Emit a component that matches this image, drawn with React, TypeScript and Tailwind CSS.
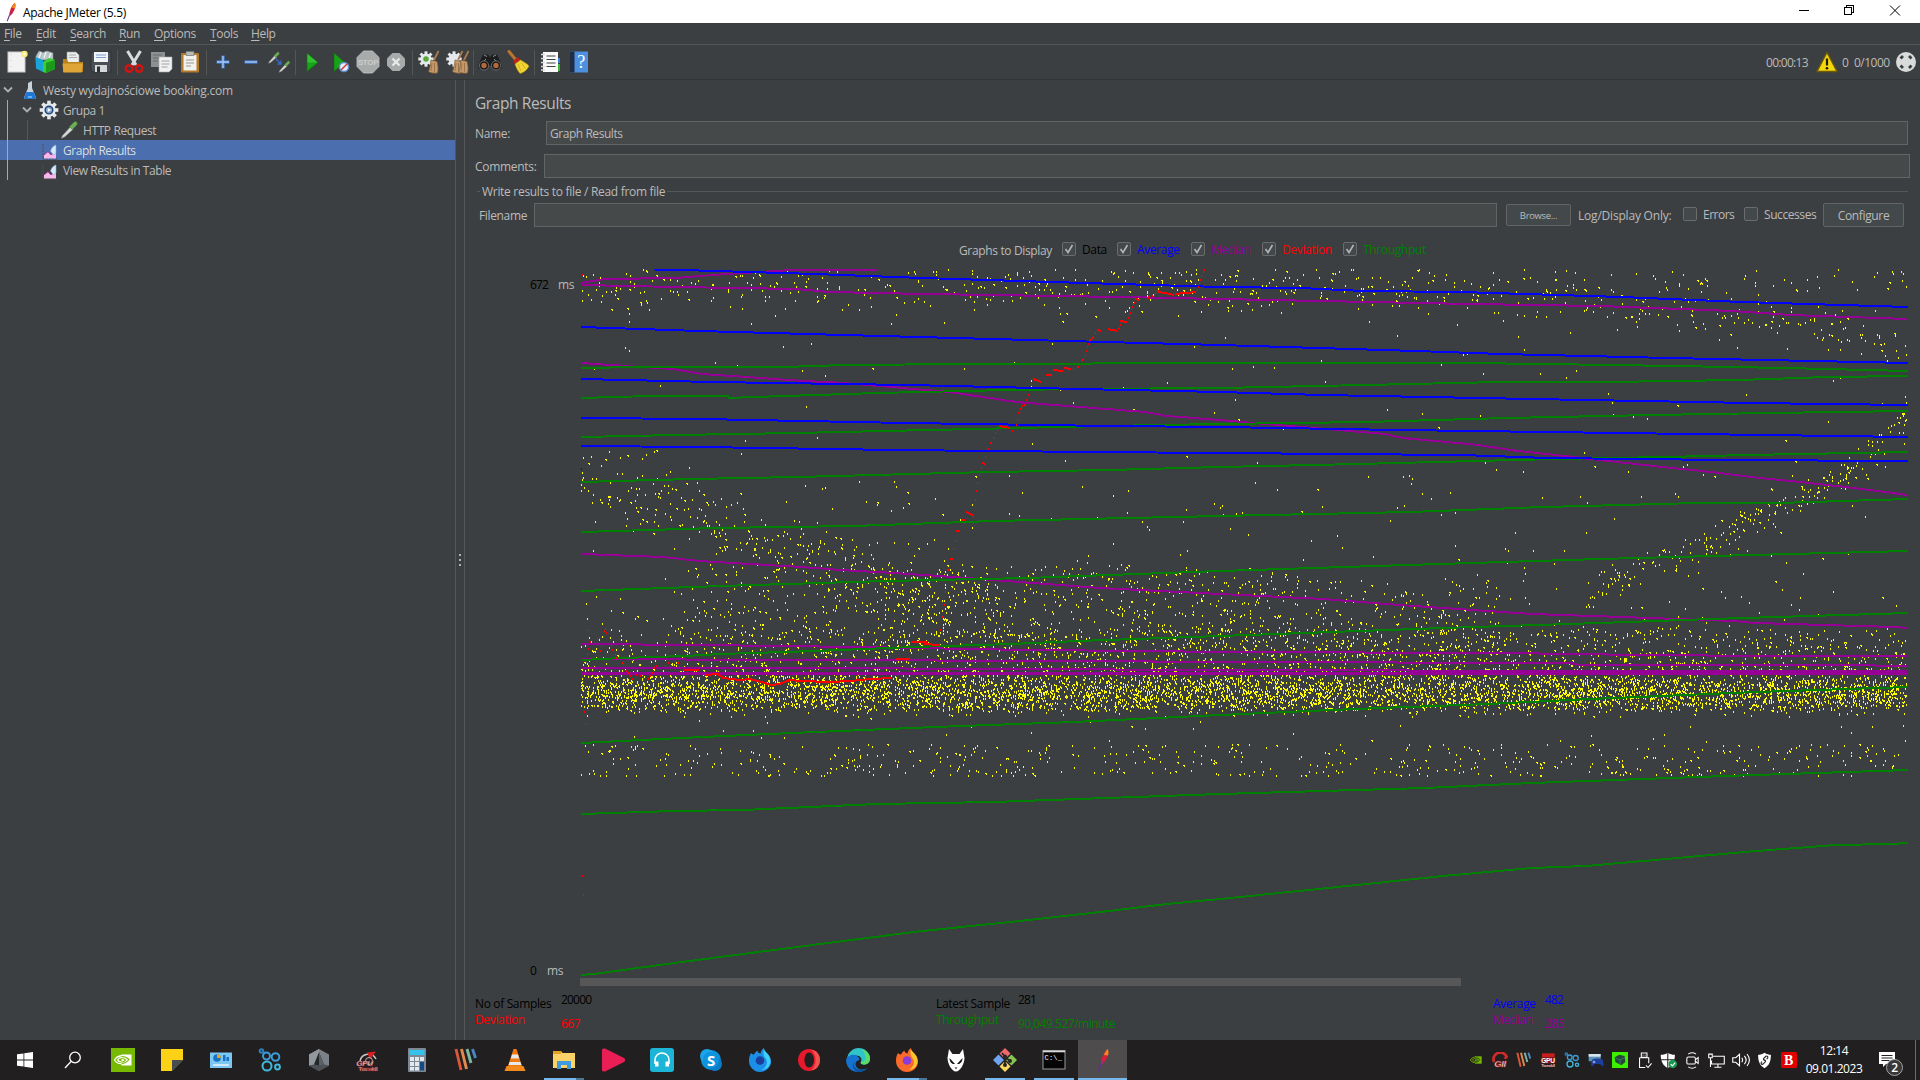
import React from "react";

type Pt = [number, number];

/* ---------- Chart data ---------- */

const averageLines: string[] = [
  "654,269.5 699,270.5 815,274 922,278 1085,283 1220,287 1300,288 1363,291 1461,292 1622,297 1742,302 1908,307",
  "581,327 699,331 844,335 1067,341 1220,345 1416,351 1502,354 1669,358 1908,363",
  "581,379 712,382 908,385 1080,389 1220,392 1322,395 1532,399 1751,403 1908,405",
  "581,418 701,419 906,423 1109,426 1220,427 1399,430 1546,432 1765,435 1908,437",
  "581,446 699,447 895,450 1091,452 1220,453 1461,455 1548,458 1725,460 1908,461",
];

const medianLines: string[] = [
  "581,283 605,279 676,278 725,274 779,271 790,269.5 877,269.5",
  "581,285 676,287 797,289 828,292 926,294 1122,297 1220,299 1470,304 1600,306 1733,311 1791,315 1908,319",
  "581,363 672,369 703,374 788,380 844,383 949,392 1016,402 1145,412 1167,416 1220,420 1265,424 1385,434 1403,438 1479,445 1510,450 1564,456 1644,465 1711,472 1751,477 1800,482 1854,488 1908,495",
  "581,554 663,557 699,561 801,567 841,570 895,573 966,578 1033,583 1100,588 1220,594 1323,599 1399,605 1532,614 1622,617 1733,621 1756,623 1894,627 1908,628",
  "581,644 700,645 859,647 1027,650 1145,651 1220,652 1506,653 1640,655 1774,656 1908,656",
  "581,659 788,660 1085,661 1220,662 1570,663 1580,665 1840,665 1908,666",
  "581,668 800,668 1220,670 1595,671",
];

const throughputLines: string[] = [
  "581,368 640,367 783,367 846,365 966,364 1220,363 1465,363 1546,364 1675,366 1785,368 1908,371",
  "581,398 650,396 728,396 729,398 754,397 877,393 1009,390 1080,389 1220,388 1365,385 1501,382 1606,382 1740,380 1827,377 1908,376",
  "581,437 676,435 795,433 975,429 1060,427 1158,425 1220,424 1367,422 1506,418 1653,415 1769,413 1908,411",
  "581,482 692,479 797,477 989,472 1109,470 1220,467 1358,464 1515,460 1555,459 1666,457 1747,455 1908,452",
  "581,532 716,528 853,526 993,521 1220,516 1410,512 1544,507 1698,503 1778,503 1908,499",
  "581,591 721,586 886,581 1027,578 1220,571 1407,565 1600,559 1751,555 1908,551",
  "581,660 623,658 685,656 721,654 815,651 913,647 1011,644 1078,641 1220,636 1443,628 1600,623 1711,619 1908,613",
  "581,743 681,738 792,733 935,727 1074,722 1220,715 1354,709 1488,704 1590,699 1756,692 1908,687",
  "581,814 674,811 743,810 877,804 993,802 1220,794 1425,788 1532,783 1725,776 1908,770",
  "581,975 594,974 667,964 743,954 859,939 922,931 1011,922 1109,911 1167,904 1220,899 1309,890 1443,876 1532,868 1586,866 1666,859 1756,851 1836,845 1890,844 1908,843",
];

const deviationRuns: string[] = [
  "683,670 699,670",
  "705,675 718,674 723,678 740,680 750,679 772,685 779,684 790,680 800,681 830,682 850,681 870,679 892,678",
  "896,659 909,659",
  "911,642 927,642",
  "924,644 940,645",
  "941,617 944,617",
  "947,570 950,570",
  "950,559 953,559",
  "956,531 960,531",
  "962,520 965,520",
  "966,512 974,516",
  "999,426 1010,428",
  "1033,379 1041,382",
  "1046,375 1052,375",
  "1053,370 1063,371",
  "1064,368 1071,369",
  "1097,330 1101,331",
  "1108,329 1117,331",
  "1120,321 1127,322",
  "1135,299 1140,300",
  "1147,298 1150,297",
  "1157,291 1160,292 1174,295",
  "1175,294 1186,293 1196,292",
];

const deviationDots: Pt[] = [
  [582, 274], [582, 875], [583, 894], [584, 711], [585, 723], [587, 629], [587, 653], [588, 648],
  [590, 641], [597, 638], [599, 637], [601, 645], [600, 650], [604, 630], [605, 628], [606, 632],
  [611, 645], [612, 649], [615, 654], [616, 657], [619, 656], [622, 662], [623, 663], [626, 670],
  [628, 672], [630, 675], [632, 678], [636, 674], [640, 675], [643, 677], [648, 678], [650, 675],
  [652, 672], [654, 667], [656, 665], [665, 665], [668, 662], [671, 665], [675, 661], [678, 662],
  [679, 666], [909, 657], [940, 629], [944, 604], [945, 591], [953, 548], [955, 540], [975, 499],
  [976, 490], [977, 482], [979, 474], [981, 467], [982, 462], [983, 462], [984, 463], [985, 456],
  [988, 448], [990, 442], [991, 442], [993, 437], [995, 432], [997, 429], [1012, 430], [1016, 424],
  [1017, 419], [1018, 412], [1019, 411], [1020, 408], [1021, 407], [1022, 405], [1024, 404], [1025, 404],
  [1026, 399], [1028, 394], [1031, 383], [1073, 368], [1077, 366], [1078, 366], [1079, 363], [1081, 360],
  [1082, 359], [1083, 358], [1085, 355], [1086, 350], [1087, 346], [1088, 343], [1089, 340], [1090, 339],
  [1091, 338], [1092, 337], [1093, 336], [1095, 332], [1118, 328], [1119, 327], [1120, 324], [1121, 321],
  [1128, 317], [1129, 314], [1130, 312], [1131, 308], [1132, 306], [1133, 303], [1134, 302], [1152, 295],
  [1155, 292], [1197, 289], [1198, 286], [1199, 282], [1200, 279], [1201, 275], [1203, 271], [1204, 269],
];

/** Deterministic pseudo random generator, so the samples keep their place between renders. */
function makeRandom(seed: number) {
  let s = seed;
  return () => {
    s = (s + 0x6d2b79f5) | 0;
    let t = Math.imul(s ^ (s >>> 15), 1 | s);
    t = (t + Math.imul(t ^ (t >>> 7), 61 | t)) ^ t;
    return ((t ^ (t >>> 14)) >>> 0) / 4294967296;
  };
}

function track(points: Pt[], x: number) {
  for (let i = 1; i < points.length; i++) {
    const [x0, y0] = points[i - 1];
    const [x1, y1] = points[i];
    if (x <= x1) return y0 + ((y1 - y0) * (x - x0)) / (x1 - x0);
  }
  return points[points.length - 1][1];
}

function buildSamples() {
  const rnd = makeRandom(20000);
  const gauss = () => rnd() + rnd() + rnd() + rnd() - 2;
  let d = "";
  const put = (x: number, y: number) => {
    if (x < 581 || x > 1907 || y < 269) return;
    d += `M${Math.floor(x)} ${Math.floor(y)}h${rnd() < 0.13 ? 2 : 1}v2h-1z`;
  };
  const anyX = () => 581 + rnd() * 1327;

  for (let i = 0; i < 4700; i++) {
    const x = anyX();
    const y = 692 + gauss() * 18;
    if (y > 674 && y < 717) put(x, y);
  }
  for (let i = 0; i < 1150; i++) put(anyX(), 675 + rnd() * 34);
  for (let i = 0; i < 2150; i++) {
    const x = anyX();
    const u = rnd();
    if (x > 860 || rnd() < 0.55) put(x, 674 - u * u * 46);
  }
  for (let i = 0; i < 720; i++) {
    const x = 680 + rnd() * 820;
    put(x, 655 - Math.pow(rnd(), 1.2) * (x > 1200 ? 75 : 90));
  }
  for (let i = 0; i < 240; i++) {
    put(880 + rnd() * 420, 570 + rnd() * 75);
  }
  for (let i = 0; i < 260; i++) put(anyX(), 655 - rnd() * 65);
  for (let i = 0; i < 540; i++) {
    const x = anyX();
    if (x > 1050 && x < 1090 && rnd() < 0.6) continue;
    put(x, 776 - Math.pow(rnd(), 1.25) * 32);
  }
  for (let i = 0; i < 50; i++) put(anyX(), 717 + rnd() * 40);

  const topTrack: Pt[] = [[581, 292], [1300, 287], [1600, 302], [1800, 320], [1908, 342]];
  for (let i = 0; i < 520; i++) {
    const x = anyX();
    put(x, track(topTrack, x) + gauss() * 22);
  }
  for (let i = 0; i < 190; i++) put(anyX(), 269 + rnd() * 24);
  for (let i = 0; i < 90; i++) put(anyX(), 310 + rnd() * 150);
  for (let i = 0; i < 180; i++) put(anyX(), 460 + rnd() * 130);

  const falling: Pt[] = [[581, 482], [640, 496], [720, 525], [780, 552], [860, 575], [1000, 598]];
  for (let i = 0; i < 370; i++) {
    const x = 581 + rnd() * 420;
    put(x, track(falling, x) + gauss() * (x < 660 ? 34 : 34));
  }

  const rising: Pt[] = [[1580, 600], [1650, 563], [1720, 538], [1780, 502], [1840, 478], [1875, 440], [1908, 415]];
  for (let i = 0; i < 250; i++) {
    const x = 1580 + rnd() * 328;
    put(x, track(rising, x) + gauss() * 16);
  }
  return d;
}

const samples = buildSamples();

function ResultsChart() {
  return (
    <svg width={1328} height={707} viewBox="580 269 1328 707" shapeRendering="crispEdges" fill="none" className="block">
      <path d={samples} fill="#ffff00" />
      <g stroke="#960096" strokeWidth={2}>
        {medianLines.map((p) => (
          <polyline key={p} points={p} />
        ))}
      </g>
      <path d="M581 672h1327v3h-1327zM1592 670h316v5h-316z" fill="#960096" />
      <g stroke="#008000" strokeWidth={2}>
        {throughputLines.map((p) => (
          <polyline key={p} points={p} />
        ))}
      </g>
      <g stroke="#0000ff" strokeWidth={2}>
        {averageLines.map((p) => (
          <polyline key={p} points={p} />
        ))}
        <path d="M581 469h1" />
      </g>
      <g stroke="#ff0000" strokeWidth={2}>
        {deviationRuns.map((p) => (
          <polyline key={p} points={p} />
        ))}
      </g>
      <path d={deviationDots.map(([x, y]) => `M${x} ${y}h1v2h-1z`).join("")} fill="#ff0000" />
    </svg>
  );
}

/* ---------- Icons ---------- */

function Ico({ children, s = 24 }: { children: React.ReactNode; s?: number }) {
  return (
    <svg width={s} height={s} viewBox="0 0 24 24" fill="none" className="block shrink-0">
      {children}
    </svg>
  );
}

const Feather = ({ s = 24 }: { s?: number }) => (
  <Ico s={s}>
    <path d="M16.500 1c1.800 3 .5 8-3 13l-3.500 3c0-6 2-12 6.500-16z" fill="#d6203a" />
    <path d="M16.500 1c1.300 2 1.200 4 .5 6.500l-4-.5c.8-2.500 2-4.500 3.500-6z" fill="#f08a1e" />
    <path d="M10.500 12.500l3.200 1L10 17.500z" fill="#a02a7a" />
    <path d="M10 16L7.500 23" stroke="#6a2a8a" strokeWidth="1.300" />
  </Ico>
);

const Dropper = () => (
  <>
    <path d="M3 22l1-3L14 8l3 3L7 20z" fill="#d8dad8" stroke="#8f9491" strokeWidth=".8" />
    <path d="M12.500 8l5.500-5.500c2-2 5.500 1 3.500 3.500L16 11.500z" fill="#6fae58" stroke="#3c6e2f" strokeWidth=".7" />
  </>
);

const gearTeeth = [0, 45, 90, 135, 180, 225, 270, 315];

const Gear = ({ x = 12, y = 12, r = 7 }: { x?: number; y?: number; r?: number }) => (
  <>
    <g fill="#e6e9eb">
      {gearTeeth.map((a) => (
        <rect key={a} x={x - r * 0.27} y={y - r * 1.4} width={r * 0.54} height={r} transform={`rotate(${a} ${x} ${y})`} />
      ))}
    </g>
    <circle cx={x} cy={y} r={r} fill="#e6e9eb" />
  </>
);

const Broom = ({ dx = 0 }: { dx?: number }) => (
  <g transform={`translate(${dx} 0)`}>
    <path d="M21.500 1l-4.500 9" stroke="#a77b4f" strokeWidth="1.800" />
    <path d="M14 10l6 1.500c1 4 1.500 8 .5 11.500-4 .5-7 0-9-1.500 1.500-3 2-7 2.500-11.500z" fill="#c39a6b" stroke="#7e5a36" strokeWidth=".7" />
    <path d="M15 13l-1 8M17.500 13l0 9" stroke="#8b6540" strokeWidth=".7" />
  </g>
);

const toolbarIcons: React.ReactNode[][] = [
  [
    <Ico>
      <rect x="3" y="2" width="17" height="20" fill="#f2f2f2" stroke="#c9c9c9" />
      <path d="M6 4v16" stroke="#bdbdbd" strokeWidth=".8" strokeDasharray="1 5" />
      <circle cx="19.500" cy="4" r="3.200" fill="#f6ea7a" />
      <circle cx="19.500" cy="4" r="1.500" fill="#fffbe0" />
    </Ico>,
    <Ico>
      <path d="M3 6l3-5 4 1.500L14 1l6 2v7H3z" fill="#b9c6c8" stroke="#7e8e92" strokeWidth=".6" />
      <path d="M8 2l-2 6M13 2l-2 6M18 3l-2 5" stroke="#f4f6f6" strokeWidth="1.200" />
      <path d="M2.500 7l7.500 3v12l-7-3.500z" fill="#1aa3d6" />
      <path d="M10 12l6-4 6 2v9l-9 4-3-1z" fill="#38cf30" />
      <path d="M13 13l9-3v9l-9 4z" fill="#1d9a1b" />
    </Ico>,
    <Ico>
      <path d="M6 2h9l3 3v8H6z" fill="#eceded" stroke="#9b9b9b" strokeWidth=".6" />
      <path d="M8 5h7M8 7.500h8" stroke="#9b9b9b" strokeWidth=".8" />
      <path d="M2 9h4l1 3h15v10H2z" fill="#b9821a" />
      <path d="M1.500 13.500h20.500l-1.500 9h-18z" fill="#dfa637" />
    </Ico>,
    <Ico>
      <path d="M2 2h20v20H4l-2-2z" fill="#4a4e55" stroke="#2b2d31" strokeWidth=".7" />
      <rect x="5" y="2" width="14" height="10" fill="#f0f3f7" />
      <path d="M7 5h10M7 7.500h10" stroke="#7ba0cd" strokeWidth="1" />
      <rect x="6" y="15" width="12" height="7" fill="#d5d7da" />
      <rect x="8" y="16.500" width="3" height="5.500" fill="#2d3035" />
    </Ico>,
  ],
  [
    <Ico>
      <path d="M5.500 1L14 15M18.500 1L10 15" stroke="#d9dbdc" strokeWidth="3" />
      <circle cx="7" cy="18.500" r="3.300" stroke="#d31212" strokeWidth="2.400" />
      <circle cx="17" cy="18.500" r="3.300" stroke="#d31212" strokeWidth="2.400" />
    </Ico>,
    <Ico>
      <path d="M1 2h14v15H1z" fill="#8d9090" />
      <path d="M3 5h9M3 8h9M3 11h5" stroke="#6a6d6d" />
      <path d="M9 7h13v12l-3 3H9z" fill="#f0f0f0" stroke="#aaa" strokeWidth=".6" />
      <path d="M11.500 11h8M11.500 14h8M11.500 17h6" stroke="#9a9a9a" strokeWidth=".9" />
    </Ico>,
    <Ico>
      <rect x="3" y="3" width="18" height="19.500" rx="1" fill="#b5792a" />
      <rect x="5.500" y="5" width="13" height="15.500" fill="#f1f1ee" />
      <path d="M8 1.500h8v4H8z" fill="#b9bbb8" stroke="#707270" strokeWidth=".7" />
      <path d="M8 10h8M8 13h8M8 16h5" stroke="#8e8e8e" strokeWidth=".9" />
    </Ico>,
  ],
  [
    <Ico>
      <path d="M12 5.500v13M5.500 12h13" stroke="#3f74c4" strokeWidth="3.600" />
      <path d="M12 6v12M6 12h12" stroke="#a9c9f2" strokeWidth="1.400" />
    </Ico>,
    <Ico>
      <path d="M5.500 12h13" stroke="#3f74c4" strokeWidth="3.600" />
      <path d="M6 12h12" stroke="#a9c9f2" strokeWidth="1.400" />
    </Ico>,
    <Ico>
      <g transform="translate(0 1) scale(.56)"><Dropper /></g>
      <g transform="translate(10.500 10) scale(.56)"><Dropper /></g>
      <path d="M9 9l4.500 4.500M14 10.500v3.500h-3.500" stroke="#2f6fd0" strokeWidth="1.300" />
    </Ico>,
  ],
  [
    <Ico>
      <path d="M7 3l11 9.500L7 21.500z" fill="#17a217" stroke="#0c6b0c" strokeWidth=".6" />
      <path d="M7.500 4l10 8.500h-10z" fill="#35bf35" />
    </Ico>,
    <Ico>
      <path d="M6 3l11 9.500L6 21.500z" fill="#17a217" stroke="#0c6b0c" strokeWidth=".6" />
      <circle cx="16" cy="17" r="4.600" fill="#e8eef8" stroke="#5c8cce" strokeWidth="1.500" />
      <path d="M13 20l6-6" stroke="#cf3030" strokeWidth="1.500" />
    </Ico>,
    <svg width="24" height="24" viewBox="0 0 24 24" className="block">
      <path d="M7.500 1h9L23 7.500v9L16.500 23h-9L1 16.500v-9z" fill="#a9abab" stroke="#c6c8c8" strokeWidth=".8" />
      <text x="12" y="15" textAnchor="middle" fontSize="8" fontWeight="700" fill="#c9cbcb" fontFamily="Liberation Sans, sans-serif">STOP</text>
    </svg>,
    <Ico>
      <path d="M8.500 3h7L21 8.500v7L15.500 21h-7L3 15.500v-7z" fill="#a9abab" />
      <path d="M8.500 8.500l7 7M15.500 8.500l-7 7" stroke="#e9ebeb" strokeWidth="2.200" />
    </Ico>,
  ],
  [
    <Ico>
      <Gear x={9} y={9} r={5.500} />
      <circle cx="9" cy="9" r="2.800" fill="#58a83a" />
      <Broom />
    </Ico>,
    <Ico>
      <Gear x={9} y={9} r={5.500} />
      <Broom dx={-4} />
      <Broom dx={2} />
    </Ico>,
  ],
  [
    <Ico>
      <path d="M5 4.500h5l2 3 2-3h5l4.500 10v4h-9v-3h-5v3h-9v-4z" fill="#1d1e20" />
      <path d="M6 5l3 1.500M18 5l-3 1.500M8 9l-3 3M16 9l3 3" stroke="#8d9092" />
      <circle cx="6" cy="15.500" r="4.600" fill="#161616" stroke="#6a6d6f" />
      <circle cx="18" cy="15.500" r="4.600" fill="#161616" stroke="#6a6d6f" />
      <circle cx="6" cy="15.500" r="2.700" fill="#b4683b" />
      <circle cx="18" cy="15.500" r="2.700" fill="#b4683b" />
    </Ico>,
    <Ico>
      <path d="M3 1.500l7 8.500" stroke="#b9752e" strokeWidth="3" strokeLinecap="round" />
      <path d="M7 11l5-4 2.500 3-5.500 4z" fill="#c0201c" />
      <path d="M9 14l5.500-4c3 2 6 3 8.500 6-2 4-5 6.500-9 7.500-2-2.500-4-6-5-9.500z" fill="#f2d530" stroke="#b4951a" strokeWidth=".6" />
      <path d="M12 14l3 7M15 12.500l4.500 6" stroke="#c9a81c" strokeWidth=".8" />
    </Ico>,
  ],
  [
    <Ico>
      <rect x="4" y="2" width="15" height="20" fill="#fafafa" />
      <path d="M7.500 6h9M7.500 9.500h9M7.500 13h9M7.500 16.500h9" stroke="#3e4346" strokeWidth="1.200" />
      <path d="M2 4.500h4M2 8.500h4M2 12.500h4M2 16.500h4M2 20h4" stroke="#d7dadb" strokeWidth="1.500" />
      <path d="M20 8v5" stroke="#3b82e0" strokeWidth="2" />
      <path d="M20 14v7" stroke="#37b837" strokeWidth="2" />
    </Ico>,
    <svg width="24" height="24" viewBox="0 0 24 24" className="block">
      <path d="M3 1.500h18v21H3z" fill="#4f8fe0" />
      <path d="M3 1.500h4.500v21H3z" fill="#1f2d45" />
      <text x="14" y="18" textAnchor="middle" fontSize="18" fill="#fff" fontFamily="Liberation Serif, serif">?</text>
    </svg>,
  ],
];

const Chevron = () => (
  <svg width="16" height="16" viewBox="0 0 16 16" className="block shrink-0" fill="none">
    <path d="M4 5.500l4 4 4-4" stroke="#adafb0" strokeWidth="1.800" />
  </svg>
);

const FlaskIcon = () => (
  <svg width="14" height="20" viewBox="0 0 14 20" className="block shrink-0">
    <path d="M5 3l4-2v7l4 9.500c0 1-1 1.500-2 1.500H3c-1 0-2-.5-2-1.500L5 8z" fill="#c9d3dc" />
    <path d="M3.500 12h7l2.500 5.500c0 1-1 1.500-2 1.500H3c-1 0-2-.5-2-1.500z" fill="#1f78d6" />
    <path d="M5 17h4" stroke="#bfe0ff" />
  </svg>
);

const GroupIcon = () => (
  <Ico s={20}>
    <Gear r={8} />
    <circle cx="12" cy="12" r="4.600" fill="#7fa3cf" stroke="#1f4474" strokeWidth="1.700" />
    <path d="M10.500 9.500l4 2.500-4 2.500z" fill="#fff" />
  </Ico>
);

const ListenerIcon = () => (
  <svg width="16" height="17" viewBox="0 0 16 17" className="block shrink-0">
    <path d="M1 1v15M1 16h14" stroke="#4c4f51" strokeDasharray="2 1" fill="none" />
    <path d="M2 15.500V12l4-3 3 3 5-4v7.500z" fill="#f5b8ea" />
    <path d="M2 12l4-3.500 3 3.500 5-4" stroke="#b02a90" strokeWidth=".8" fill="none" />
    <path d="M8.500 8c1-3.500 3-5.500 5.500-6v8L11.500 12z" fill="#d5e8fa" stroke="#7ea9d4" strokeWidth=".6" />
  </svg>
);

/* ---------- Window frame ---------- */

function TitleBar() {
  return (
    <div className="flex h-[23px] items-center bg-white text-black">
      <div className="-ml-[2px] flex w-[25px] items-center justify-center">
        <Feather s={20} />
      </div>
      <span className="pt-px tracking-[-0.280px]">Apache JMeter (5.5)</span>
      <svg width="110" height="23" viewBox="0 0 110 23" fill="none" stroke="#000" className="mr-[12px] ml-auto block" shapeRendering="crispEdges">
        <path d="M1 10.500h10" />
        <path d="M46.500 7.500h7v7h-7zM48.500 7V5.500h7v7H54" />
        <path d="M92 5.500l10 10M102 5.500l-10 10" shapeRendering="auto" />
      </svg>
    </div>
  );
}

const menuItems: [string, string][] = [
  ["File", "w-[32px]"],
  ["Edit", "w-[34px]"],
  ["Search", "w-[49px]"],
  ["Run", "w-[35px]"],
  ["Options", "w-[56px]"],
  ["Tools", "w-[41px]"],
  ["Help", "w-[40px]"],
];

function MenuBar() {
  return (
    <div className="flex h-[22px] items-center border-b border-[#555555] pl-[4px]">
      {menuItems.map(([label, width]) => (
        <span key={label} className={`${width} whitespace-nowrap`}>
          <span className="underline underline-offset-2">{label[0]}</span>
          {label.slice(1)}
        </span>
      ))}
    </div>
  );
}

function Toolbar() {
  return (
    <div className="flex h-[35px] items-center border-b border-[#323435] pr-[3px] pl-[3px]">
      {toolbarIcons.map((group, g) => (
        <React.Fragment key={g}>
          {g > 0 && (
            <div className="flex w-[5px] justify-center">
              <div className="h-[25px] w-px bg-[#555555]" />
            </div>
          )}
          {group.map((icon, i) => (
            <div key={i} className="flex w-[28px] justify-center">
              {icon}
            </div>
          ))}
        </React.Fragment>
      ))}
      <div className="ml-auto flex items-center">
        <span className="w-[50px] tracking-[-0.700px]">00:00:13</span>
        <svg width="22" height="22" viewBox="0 0 22 22" className="mr-[4px] block">
          <path d="M11 1.500L21 20.500H1z" fill="#f4d60c" stroke="#6e5a08" strokeWidth="1.400" strokeLinejoin="round" />
          <path d="M11 7.500v7" stroke="#1c1a08" strokeWidth="2.200" />
          <circle cx="11" cy="17.300" r="1.300" fill="#1c1a08" />
        </svg>
        <span className="w-[12px] tracking-[-0.600px]">0</span>
        <span className="w-[41px] tracking-[-0.500px]">0/1000</span>
        <svg width="22" height="22" viewBox="0 0 22 22" className="block">
          <circle cx="11" cy="11" r="10" fill="#d9dbdb" />
          <g stroke="#3a3d3e" strokeWidth="2.800">
            <path d="M5.500 7.500L8 5M14 5l2.500 2.500M16.500 14.500L14 17M8 17l-2.500-2.500" />
          </g>
        </svg>
      </div>
    </div>
  );
}

/* ---------- Test plan tree ---------- */

function Tree() {
  return (
    <div className="relative w-[455px] shrink-0">
      <div className="flex h-[20px] items-center">
        <Chevron />
        <div className="mr-[6px] ml-[7px]"><FlaskIcon /></div>
        <span className="pt-px tracking-[-0.230px]">Westy wydajnościowe booking.com</span>
      </div>
      <div className="flex h-[20px] items-center pl-[19px]">
        <Chevron />
        <div className="mr-[4px] ml-[4px]"><GroupIcon /></div>
        <span className="tracking-[-0.450px]">Grupa 1</span>
      </div>
      <div className="flex h-[20px] items-center pl-[59px]">
        <div className="mr-[4px]"><Ico s={20}><Dropper /></Ico></div>
        <span className="tracking-[-0.400px]">HTTP Request</span>
      </div>
      <div className="flex h-[20px] items-center bg-[#4b6eaf] pt-[2px] pl-[42px] text-[#dcdedf]">
        <div className="mr-[5px]"><ListenerIcon /></div>
        <span className="-mt-[2px] tracking-[-0.450px]">Graph Results</span>
      </div>
      <div className="flex h-[20px] items-center pt-[2px] pl-[42px]">
        <div className="mr-[5px]"><ListenerIcon /></div>
        <span className="-mt-[2px] tracking-[-0.400px]">View Results in Table</span>
      </div>
      <div className="absolute top-[20px] left-[7px] h-[80px] w-px bg-[#6db9f5]" />
      <div className="absolute top-[40px] left-[27px] h-[20px] w-px bg-[#555859]" />
    </div>
  );
}

/* ---------- Graph results panel ---------- */

function CheckBox({ checked }: { checked?: boolean }) {
  return (
    <svg width="15" height="15" viewBox="0 0 15 15" className="block shrink-0" fill="none">
      <rect x=".5" y=".5" width="13" height="13" rx="1.500" fill="#43494a" stroke="#6b6b6b" />
      {checked && <path d="M3.500 7l2.500 3.500L10.500 3" stroke="#b4b6b6" strokeWidth="1.600" />}
    </svg>
  );
}

const series: [string, string, string][] = [
  ["Data", "text-black", "w-[40px]"],
  ["Average", "text-[#0000ff]", "w-[59px]"],
  ["Median", "text-[#960096]", "w-[56px]"],
  ["Deviation", "text-[#ff0000]", "w-[66px]"],
  ["Throughput", "text-[#008000]", "w-[75px]"],
];

const field = "h-[24px] border border-[#646464] bg-[#45494a]";

function StatBlock({ rows, labelWidth, width }: { rows: [string, string, string][]; labelWidth: string; width: string }) {
  return (
    <div className={`${width} shrink-0`}>
      {rows.map(([label, value, tone], i) => (
        <div key={label} className={`flex h-[16px] whitespace-nowrap ${tone}`}>
          <span className={labelWidth}>{label}</span>
          <span className={i === 0 ? "-mt-[4px] tracking-[-0.800px]" : "mt-[4px] tracking-[-0.500px]"}>{value}</span>
        </div>
      ))}
    </div>
  );
}

function Panel() {
  return (
    <div className="min-w-0 flex-1 border-l border-[#555555] pl-[10px]">
      <h1 className="mt-[10px] h-[24px] text-[15.500px] leading-[26px] font-normal tracking-[-0.4px]">Graph Results</h1>
      <div className="mt-[7px] flex h-[24px] items-center">
        <span className="w-[71px]">Name:</span>
        <div className={`${field} w-[1362px] pl-[3px] leading-[23px] tracking-[-0.450px]`}>Graph Results</div>
      </div>
      <div className="mt-[9px] flex h-[24px] items-center">
        <span className="w-[69px] tracking-[-0.300px]">Comments:</span>
        <div className={`${field} w-[1366px]`} />
      </div>
      <div className="mt-[4px] flex h-[19px] items-center pl-[2px]">
        <div className="h-px w-[3px] bg-[#555859]" />
        <span className="mx-[2px] tracking-[-0.300px]">Write results to file / Read from file</span>
        <div className="mr-[12px] h-px flex-1 bg-[#555859]" />
      </div>
      <div className="mt-[2px] flex h-[24px] items-center pl-[4px]">
        <span className="w-[55px]">Filename</span>
        <div className={`${field} w-[963px]`} />
        <button className="ml-[9px] h-[22px] w-[65px] rounded-[2px] border border-[#646464] bg-[#43494a] text-[9.500px]">Browse...</button>
        <span className="ml-[7px] w-[105px] tracking-[-0.200px]">Log/Display Only:</span>
        <div className="-mt-[2px] flex items-center">
          <CheckBox />
          <span className="w-[46px] pl-[5px] tracking-[-0.500px]">Errors</span>
          <CheckBox />
          <span className="w-[64px] pl-[5px] tracking-[-0.420px]">Successes</span>
        </div>
        <button className="h-[24px] w-[81px] rounded-[2px] border border-[#646464] bg-[#43494a]">Configure</button>
      </div>
      <div className="mt-[13px] flex h-[18px] items-center pl-[484px]">
        <span className="w-[103px] pt-[2px]">Graphs to Display</span>
        {series.map(([label, tone, width]) => (
          <div key={label} className="flex items-center">
            <CheckBox checked />
            <span className={`${width} ${tone} pl-[5px]`}>{label}</span>
          </div>
        ))}
      </div>
      <div className="mt-[11px] flex">
        <div className="flex w-[105px] flex-col justify-between pt-[7px]">
          <div className="flex h-[18px] pl-[55px]">
            <span className="w-[28px] tracking-[-0.800px] text-black">672</span>
            <span>ms</span>
          </div>
          <div className="-mb-[4px] flex h-[18px] pl-[55px]">
            <span className="w-[17px] text-black">0</span>
            <span>ms</span>
          </div>
        </div>
        <ResultsChart />
      </div>
      <div className="mt-[2px] ml-[105px] h-[8px] w-[881px] bg-[#575757]" />
      <div className="mt-[9px] flex">
        <StatBlock
          width="w-[461px]"
          labelWidth="w-[86px]"
          rows={[["No of Samples", "20000", "text-black"], ["Deviation", "667", "text-[#ff0000]"]]}
        />
        <StatBlock
          width="w-[557px]"
          labelWidth="w-[82px]"
          rows={[["Latest Sample", "281", "text-black"], ["Throughput", "90,049.527/minute", "text-[#008000]"]]}
        />
        <StatBlock
          width="w-[120px]"
          labelWidth="w-[52px]"
          rows={[["Average", "482", "text-[#0000ff]"], ["Median", "285", "text-[#960096]"]]}
        />
      </div>
    </div>
  );
}

/* ---------- Taskbar ---------- */

const Stripes = ({ s = 24 }: { s?: number }) => (
  <Ico s={s}>
    <path d="M2 1l5 21" stroke="#d9573a" strokeWidth="2.900" />
    <path d="M7.500 1l5 20" stroke="#e08a50" strokeWidth="2.900" />
    <path d="M13 1l4 14" stroke="#7fb7a2" strokeWidth="2.900" />
    <path d="M18.500 1l3 9" stroke="#4a86c4" strokeWidth="2.900" />
  </Ico>
);

const Bubbles = ({ s = 24 }: { s?: number }) => (
  <Ico s={s}>
    <g strokeWidth="2">
      <circle cx="3.500" cy="3" r="1.800" stroke="#2c7fb8" />
      <circle cx="8.500" cy="8" r="3.500" stroke="#3c9bd6" />
      <circle cx="17.500" cy="9" r="3.800" stroke="#3c9bd6" />
      <circle cx="9" cy="18" r="4.500" stroke="#41b9dc" />
      <circle cx="19.500" cy="19" r="2.400" stroke="#41b9dc" />
    </g>
  </Ico>
);

const NvidiaEye = ({ color, ring }: { color: string; ring: string }) => (
  <>
    <path d="M10.500 6.500H20.500v11H10.500z" fill={color} />
    <path d="M3.500 12c3-5 10-6 14-1-3 5-10 7-14 1z" stroke={color} strokeWidth="1.300" />
    <path d="M6.500 12c2-3 5-3 7.500-.5-2 3-5 3.500-7.500.5z" stroke={color} strokeWidth="1.200" />
    <path d="M10.500 8.500c4 0 6 1.500 7.500 3-2 2.500-4.500 4-7.500 4M10.500 10.500c2 0 3 .5 4 1.500-1 1.500-2.500 2-4 2" stroke={ring} strokeWidth="1.200" />
  </>
);

const FirefoxShape = ({ outer, mid, core }: { outer: string; mid: string; core: string }) => (
  <>
    <path d="M3 5c1 1 2 1.500 3 1.500 1-2 2-3 3.500-4 0 2 1 2.500 3 3C13 3 14 1 16 0c0 3 2 4 4 6 2 2.500 3 5 3 7.500C23 19.500 18 24 12 24S1 19 1 13c0-3 .5-5.500 2-8z" fill={outer} />
    <path d="M16 1c0 3 7 5 6.500 13-.5 5-5 8-9 8 6-3 7-9 3-13-1-2-1.500-5-.5-8z" fill={mid} />
    <circle cx="12" cy="12.500" r="4.300" fill={core} />
  </>
);

type TaskApp = { icon: React.ReactNode; state?: "open" | "stacked" | "active" };

const GpuIcon = ({ s = 24 }: { s?: number }) => (
  <svg width={s} height={s} viewBox="0 0 24 24" className="block shrink-0">
    <path d="M4 13a8.500 8.500 0 0 1 16-2" fill="#241a1a" stroke="#c9c9c9" strokeWidth="1.500" />
    <path d="M11 4.500l9-1-6 8z" fill="#d42020" />
    <circle cx="13" cy="13" r="3.500" fill="none" stroke="#b9b9b9" />
    <text x="8.500" y="17.500" textAnchor="middle" fontSize="8" fontWeight="700" fontStyle="italic" fill="#fff" stroke="#a01414" strokeWidth=".4" fontFamily="Liberation Sans, sans-serif">GPU</text>
    <text x="12" y="23" textAnchor="middle" fontSize="6" fontWeight="700" fill="#f0d8d8" stroke="#a01414" strokeWidth=".3" fontFamily="Liberation Sans, sans-serif">TweakII</text>
  </svg>
);

const apps: TaskApp[] = [
  {
    icon: (
      <svg width="16" height="16" viewBox="0 0 16 16" className="block" fill="#fff">
        <path d="M0 2.300l6.500-.9v6.200H0zM7.300 1.300L16 0v7.600H7.300zM0 8.400h6.500v6.200L0 13.700zM7.300 8.400H16V16l-8.700-1.300z" />
      </svg>
    ),
  },
  {
    icon: (
      <svg width="18" height="18" viewBox="0 0 18 18" className="-ml-[2px] block" fill="none" stroke="#fff" strokeWidth="1.300">
        <circle cx="11" cy="6.500" r="5.300" />
        <path d="M7 10.500L1 17" />
      </svg>
    ),
  },
  { icon: <Ico><rect width="24" height="24" fill="#76b900" /><NvidiaEye color="#fff" ring="#76b900" /></Ico> },
  { icon: <Ico><path d="M1 1h22v11l-11 11H1z" fill="#fcd116" /><path d="M12 12h11L12 23z" fill="#2f3133" /><path d="M12 23V12h11z" fill="#4a4c4e" /></Ico> },
  {
    icon: (
      <Ico>
        <rect x="1" y="4.500" width="22" height="15.500" fill="#7cc6f2" />
        <circle cx="8" cy="10" r="3.800" fill="#1673c4" />
        <path d="M8 10V6.200A3.800 3.800 0 0 1 11.800 10z" fill="#f0a020" />
        <path d="M14 7h2.500v6H14zM17.500 9H20v4h-2.500z" fill="#1673c4" />
        <path d="M4 17h16" stroke="#e9f6ff" strokeWidth="1.500" />
      </Ico>
    ),
  },
  { icon: <Bubbles /> },
  {
    icon: (
      <Ico>
        <path d="M12 1l10 5.500v11L12 23 2 17.500v-11z" fill="#7b8187" />
        <path d="M12 1v3L6.500 17 2 17.500v-11z" fill="#92989d" />
        <path d="M12 4.500l5 12-5 1.500-5-1.500z" fill="#23272a" />
        <path d="M12 4.500L17 16.500 12 18z" fill="#5a6066" />
        <path d="M2 17.500l5-1 5 1.500 5-1.500 5 1L12 23z" fill="#4a5056" />
      </Ico>
    ),
  },
  { icon: <GpuIcon /> },
  {
    icon: (
      <Ico>
        <rect x="3" width="18" height="24" rx="1" fill="#7c8894" />
        <rect x="4.500" y="2" width="15" height="5" fill="#35c3ee" />
        <path d="M5 9h4v4H5zM10 9h4v4h-4zM15 9h4v4h-4zM5 14h4v4H5zM10 14h4v4h-4zM5 19h4v3.500H5zM10 19h4v3.500h-4z" fill="#e3e8ec" />
        <path d="M15 14h4v8.500h-4z" fill="#164a86" />
      </Ico>
    ),
  },
  { icon: <Stripes /> },
  {
    icon: (
      <Ico>
        <path d="M10.500 1h3l5.500 17H5z" fill="#f07a12" />
        <path d="M9 6.500h6l1.200 4H7.800zM6.600 14h10.800l1 3H5.600z" fill="#e8e8e8" />
        <path d="M3.500 18h17l2 5h-21z" fill="#f58a1c" />
      </Ico>
    ),
  },
  {
    icon: (
      <Ico>
        <path d="M1 3h8l1.500 2H23v15H1z" fill="#fbd268" />
        <path d="M1 3h8v3H1z" fill="#e0a422" />
        <path d="M5 21v-8h14v8h-4v-4H9v4z" fill="#3f9ae0" />
      </Ico>
    ),
    state: "stacked",
  },
  { icon: <Ico><path d="M1 2c0-1.500 2-2 3.500-1.200L23 10c1.500 1 1.500 3 0 4L4.500 23.200C3 24 1 23.500 1 22z" fill="#e91e55" /></Ico> },
  {
    icon: (
      <Ico>
        <rect width="24" height="24" rx="3" fill="#1cb5d8" />
        <path d="M5 16v-4a7 7 0 0 1 14 0v4" stroke="#fff" strokeWidth="1.600" />
        <path d="M5 13.500h3.500v5H5zM15.500 13.500H19v5h-3.500z" fill="#fff" />
      </Ico>
    ),
  },
  {
    icon: (
      <svg width="24" height="24" viewBox="0 0 24 24" className="block">
        <circle cx="12" cy="12" r="10" fill="#0b93dc" />
        <circle cx="8" cy="8" r="7" fill="#1ba4ea" />
        <circle cx="16" cy="16" r="7" fill="#0a7cc8" />
        <circle cx="12" cy="12" r="8" fill="#0f93dc" />
        <text x="12" y="17.500" textAnchor="middle" fontSize="15" fontWeight="700" fill="#fff" fontFamily="Open Sans, sans-serif">S</text>
      </svg>
    ),
  },
  { icon: <Ico><FirefoxShape outer="#1b8fe8" mid="#3fd0f8" core="#1c3f9c" /></Ico> },
  {
    icon: (
      <Ico>
        <path fillRule="evenodd" d="M12 1c6.500 0 11 5 11 11s-4.500 11-11 11S1 18 1 12 5.500 1 12 1zm0 3.500c-2.700 0-4.500 3.300-4.500 7.500s1.800 7.500 4.500 7.500 5-3.300 5-7.500-2.300-7.500-5-7.500z" fill="#e8192c" />
        <path d="M14 2c6 0 9 5 9 10s-3 10-9 10c3-2 4.500-6 4.500-10S17 4 14 2z" fill="#f0524e" />
      </Ico>
    ),
  },
  {
    icon: (
      <Ico>
        <path d="M1 11C2 4 7 0 12.500 0 19 0 24 5 24 10.500c0 4-3 6-6 6-2.500 0-4-1-3-3 1.500-3-1-6-5-6-4 0-7 1-9 3.500z" fill="#2fc4c8" />
        <path d="M15 1c5.500 1.500 9 5 9 9.500 0 4-3 6-6 6-2.500 0-4-1-3-3 3 1 5-1 4.500-5C19 5 17 2.500 15 1z" fill="#5bdc6a" />
        <path d="M0 12c1-4 5-6 9-5 3 1 5 3 4.500 5-4 1-5 4-3 7 2 3 6 3.500 11 1-3 3-6 4-9.500 4C5 24 0 18.500 0 12z" fill="#1573cf" />
        <path d="M9 12c-2 2-2 6 1 8.500 3 2.500 7 2 11-.5-3 3.500-6 4-9.500 4C7 22 5 16 9 12z" fill="#0c4f9e" />
      </Ico>
    ),
  },
  { icon: <Ico><FirefoxShape outer="#fb6a2a" mid="#fdc52e" core="#8b3bd6" /></Ico>, state: "stacked" },
  {
    icon: (
      <Ico>
        <path d="M5 1l3.500 5h7L19 1l1.500 9c0 5-4 13.500-8.500 13.500S3.500 15 3.500 10z" fill="#fff" />
        <path d="M5.500 10l5.500 6c-3 .5-5.500-2-5.500-6zM18.500 10L13 16c3 .5 5.500-2 5.500-6zM10.500 19.500h3l-1.500 1.500z" fill="#111" />
      </Ico>
    ),
  },
  {
    icon: (
      <Ico>
        <path d="M12 0l5.500 5.500L12 11 6.500 5.500z" fill="#f0696a" />
        <path d="M18.500 6.500L24 12l-5.500 5.500L13 12z" fill="#84c650" />
        <path d="M12 13l5.500 5.500L12 24l-5.500-5.500z" fill="#f8d95c" />
        <path d="M5.500 6.500L11 12l-5.500 5.500L0 12z" fill="#6fa5f0" />
        <path d="M9 5l3 4v9M12 9l5 4" stroke="#2a2424" strokeWidth="1.800" />
        <circle cx="12" cy="17" r="2" fill="#2a2424" /><circle cx="17" cy="13" r="2" fill="#2a2424" /><circle cx="12" cy="8.500" r="2" fill="#2a2424" />
      </Ico>
    ),
    state: "open",
  },
  {
    icon: (
      <svg width="24" height="24" viewBox="0 0 24 24" className="block">
        <rect x="1" y="2.500" width="22" height="18.500" fill="#050505" stroke="#9a9a9a" />
        <path d="M1 3.500h22" stroke="#d8d8d8" strokeWidth="1.600" />
        <text x="2.500" y="12" fontSize="7" fill="#fff" textLength="17" fontFamily="Liberation Mono, monospace">C:\_</text>
      </svg>
    ),
    state: "open",
  },
  { icon: <Feather s={24} />, state: "active" },
];

const trayIcons: React.ReactNode[] = [
  <Ico s={16}><NvidiaEye color="#76b900" ring="#1c2a10" /></Ico>,
  <svg width="16" height="16" viewBox="0 0 24 24" className="block">
    <path d="M3 15a9.500 9.500 0 0 1 19-8l-3 3" fill="none" stroke="#d42a2a" strokeWidth="4" />
    <text x="12" y="22" textAnchor="middle" fontSize="14" fontWeight="700" fontStyle="italic" fill="#fff" stroke="#b01818" strokeWidth=".8" fontFamily="Liberation Sans, sans-serif">GII</text>
  </svg>,
  <Stripes s={16} />,
  <svg width="16" height="16" viewBox="0 0 24 24" className="block">
    <path d="M3 2h19v6H3z" fill="#c81e1e" />
    <path d="M1 8h22v9H1z" fill="#8d1414" />
    <text x="12" y="16" textAnchor="middle" fontSize="10" fontWeight="700" fill="#fff" fontFamily="Liberation Sans, sans-serif">GPU</text>
    <text x="12" y="23" textAnchor="middle" fontSize="6.500" fontWeight="700" fill="#f0b0b0" fontFamily="Liberation Sans, sans-serif">TweakII</text>
  </svg>,
  <Bubbles s={16} />,
  <Ico s={16}>
    <path d="M1 3h18v11H1z" fill="#5f93b9" />
    <path d="M1 3h18v4H1z" fill="#d6e6f0" />
    <path d="M6 12c2-3 14-3 16 0 1 2 2 7 1 9-2 1-4-2-5-3h-8c-1 1-3 4-5 3-1-2 0-7 1-9z" fill="#1c3f9c" />
    <path d="M9 13v4M7 15h4" stroke="#dfe8ff" />
  </Ico>,
  <Ico s={16}>
    <rect width="24" height="24" fill="#3cf000" />
    <path d="M4 8l7-4 8 2 1 9-6 5-9-5z" fill="#24453a" />
    <path d="M5 9l7 3 8-4M12 12v7" stroke="#4f8f7c" />
  </Ico>,
  <Ico s={17}>
    <g stroke="#fff" strokeWidth="1.500">
      <path d="M7.500 1.500h8v6h-8zM5 8h13v8M5 8v14h8M14 19l3 3 5-6" />
      <path d="M10 4v1M13 4v1" />
    </g>
  </Ico>,
  <Ico s={17}>
    <path d="M11 1c3 2 6 3 10 3 0 9-3 15-10 19C4 19 1 13 1 4c4 0 7-1 10-3z" fill="#fff" />
    <path d="M11 1v22M1 11h20" stroke="#202020" strokeWidth="1.500" />
    <circle cx="18" cy="17" r="6" fill="#179a50" />
    <path d="M15 17l2.500 2.500L21.500 15" stroke="#fff" strokeWidth="1.600" />
  </Ico>,
  <Ico s={17}>
    <g stroke="#fff" strokeWidth="1.500">
      <rect x="4" y="7" width="12" height="10" rx="2" />
      <path d="M16 11l4-3v8l-4-3" />
      <path d="M6 3c3-2 8-2 11 0M6 21c3 2 8 2 11 0" />
    </g>
  </Ico>,
  <Ico s={17}>
    <g stroke="#fff" strokeWidth="1.500">
      <path d="M7 6h16v11H5v-5M14 17v4M9 21.500h10" />
      <path d="M1 3h5v5H1zM3.500 8v13" />
    </g>
  </Ico>,
  <Ico s={18}>
    <g stroke="#fff" strokeWidth="1.500">
      <path d="M1 9h4l5-4.500v15L5 15H1z" />
      <path d="M13 9c1.500 2 1.500 4 0 6M16.500 6.500c3 3.500 3 7.500 0 11M20 4c4 5 4 11 0 16" />
    </g>
  </Ico>,
  <Ico s={17}>
    <path d="M12 1c3 2 6 3 9 3 0 9-2 15-9 19-7-4-9-10-9-19 3 0 6-1 9-3z" fill="#fff" />
    <path d="M8.500 13.500l-1 1c-1 2 1 3.500 2.500 2.500l3-3c1-1.500 0-3-1.500-3M15 10l1.500-1.500c1-2-1-3.500-2.500-2.500l-3 3c-1 1.500 0 3 1.500 3" stroke="#222" strokeWidth="1.600" />
  </Ico>,
  <svg width="16" height="16" viewBox="0 0 16 16" className="block">
    <rect width="16" height="16" rx="1.500" fill="#e00000" />
    <text x="7.500" y="13" textAnchor="middle" fontSize="14" fontWeight="700" fill="#fff" fontFamily="Liberation Serif, serif">B</text>
  </svg>,
];

function Taskbar() {
  return (
    <div className="flex h-[40px] items-stretch bg-[#211f20] text-white">
      {apps.map((app, i) => (
        <div
          key={i}
          className={`flex w-[49px] shrink-0 flex-col items-center ${app.state === "active" ? "bg-[#4e4c4d]" : ""}`}
        >
          <div className="flex flex-1 items-center">{app.icon}</div>
          {app.state === "active" && <div className="-mt-[2px] h-[2px] w-full bg-[#76b9ed]" />}
          {app.state === "open" && <div className="-mt-[2px] h-[2px] w-[40px] bg-[#76b9ed]" />}
          {app.state === "stacked" && (
            <div className="-mt-[2px] flex h-[2px] w-[40px]">
              <div className="flex-1 bg-[#76b9ed]" />
              <div className="w-[8px] bg-[#4b7797]" />
            </div>
          )}
        </div>
      ))}
      <div className="ml-auto flex items-center">
        {trayIcons.map((icon, i) => (
          <div key={i} className="flex w-[24.100px] justify-center">
            {icon}
          </div>
        ))}
      </div>
      <div className="flex w-[66px] flex-col items-center justify-center text-[12px] leading-[18px] tracking-[-0.450px] whitespace-nowrap">
        <span>12:14</span>
        <span>09.01.2023</span>
      </div>
      <svg width="30" height="40" viewBox="0 0 30 40" className="ml-[10px] block">
        <path d="M2 12h16v12H9l-3 3v-3H2z" fill="#fff" />
        <path d="M4.500 15.500h11M4.500 18h11M4.500 20.500h8" stroke="#211f20" />
        <circle cx="17.500" cy="27.500" r="8" fill="#38383a" stroke="#a5a5a5" />
        <text x="17.500" y="32" textAnchor="middle" fontSize="12" fontWeight="600" fill="#fff" fontFamily="Open Sans, sans-serif">2</text>
      </svg>
      <div className="mr-[4px] ml-[8px] w-px bg-[#6b6b6b]" />
    </div>
  );
}

export default function App() {
  return (
    <div className="flex h-[1080px] w-[1920px] flex-col overflow-hidden bg-[#3c3f41] font-['Open_Sans','Noto_Sans',sans-serif] text-[12px] leading-[17px] tracking-[-0.350px] text-[#bbbbbb]">
      <TitleBar />
      <MenuBar />
      <Toolbar />
      <div className="flex min-h-0 flex-1">
        <Tree />
        <div className="flex w-[9px] shrink-0 flex-col items-center justify-center gap-[3px] border-l border-[#555555]">
          <div className="h-[2px] w-[2px] bg-[#b0b2b3]" />
          <div className="h-[2px] w-[2px] bg-[#b0b2b3]" />
          <div className="h-[2px] w-[2px] bg-[#b0b2b3]" />
        </div>
        <Panel />
      </div>
      <Taskbar />
    </div>
  );
}
